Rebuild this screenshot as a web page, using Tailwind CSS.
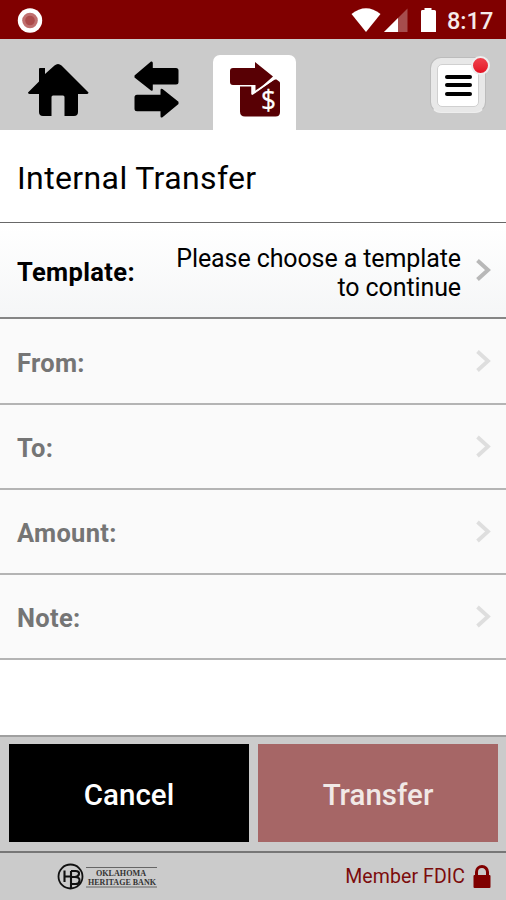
<!DOCTYPE html>
<html lang="en">
<head>
<meta charset="utf-8">
<meta name="viewport" content="width=device-width, initial-scale=1">
<title>Internal Transfer</title>
<script src="https://cdn.jsdelivr.net/npm/@tailwindcss/browser@4"></script>
</head>
<body class="bg-white">
<div class="flex h-[900px] w-[506px] flex-col overflow-hidden font-['Roboto',sans-serif] text-black">
  <header class="flex h-[39px] shrink-0 items-center bg-[#800000] pl-[17px] pr-3">
    <svg class="size-[26px]" viewBox="0 0 26 26"><circle cx="13" cy="13.500" r="12.200" fill="#fff"/><circle cx="13" cy="13.500" r="7.800" fill="#c06f6f"/><circle cx="13" cy="13.500" r="4.800" fill="#ac4b4b"/></svg>
    <svg class="ml-auto h-[39px] w-[88px]" viewBox="350 0 88 39"><path d="M351.500 14Q366 2.500 380.500 14L366 32Z" fill="#fff"/><path d="M407.500 8.500V32H384Z" fill="#a64d4d"/><path d="M398 18V32H384Z" fill="#fff"/><path d="M422 10h2.500V8h7v2h3q1.500 0 1.500 1.500V32h-15V11.500q0-1.500 1-1.500Z" fill="#fff"/></svg>
    <time class="ml-[9px] w-[47px] whitespace-nowrap pt-[3px] text-[23.500px] font-medium leading-[39px] text-[#f6eaea]">8:17</time>
  </header>
  <nav class="flex h-[91px] shrink-0 items-end bg-[#cbcbcb]">
    <a class="ml-[28px] h-[75px] w-[61px]"><svg class="h-[75px] w-[61px]" viewBox="28 55 61 75"><path d="M39 69q0-1 1-1h5v6l9.500-8.500q3.500-3 7 0L88.500 92.500q0 1.500-2 1.500H78v18q0 4-4 4h-9.500V97q0-1.500-1.500-1.500H53q-1.500 0-1.500 1.500v19H43q-4 0-4-4V94h-8q-3 0-3-1.500L39 81.500Z" fill="#000"/></svg></a>
    <a class="ml-[43px] h-[75px] w-[50px]"><svg class="h-[75px] w-[50px]" viewBox="132 55 50 75"><path d="M134.500 75.500L151 61.500q1.800-.5 1.800 1.500v5H176q2.500 0 2.500 2.500v11.500q0 2.500-2.500 2.500h-23.200v5q0 1.800-1.800 1L134.500 77.500ZM178.500 101.800L162.500 89q-2-.8-2 1.200v4.500H137q-2.500 0-2.500 2.500v11.500q0 2.500 2.500 2.500h23.500v5q0 2 2 1L178.500 104Z" fill="#000"/></svg></a>
    <a class="ml-[31px] h-[75px] w-[83px] rounded-t-[7px] bg-white"><svg class="h-[75px] w-[83px]" viewBox="213 55 83 75"><path d="M240 86h11.500v8l1 1L274.500 79.500h2q3.500 2 3.500 4v28.500q0 4.500-4.500 4.500h-30.500q-5 0-5-5Z" fill="#580004"/><path d="M230 71q0-3 3-3h22v-6l18 14.500L255.500 92v-7H233q-3 0-3-3Z" fill="#580004"/><path d="M239.500 85.700h12.700v7.800L275 78.300" fill="none" stroke="#fff" stroke-width="1.400"/><text x="261" y="110" fill="#fff" stroke="#fff" stroke-width=".3" font-family="Open Sans" font-size="28" textLength="15" lengthAdjust="spacingAndGlyphs">$</text></svg></a>
    <button class="relative mb-[17px] ml-[134px] flex h-[56px] w-[56px] items-center justify-center rounded-[11px] border border-[#bcbcbc] border-b-[#eee] bg-[#e8e8e8]">
      <span class="flex h-[43px] w-[42px] flex-col items-center justify-center gap-[4.500px] rounded-[5px] border border-[#d0d0d0] bg-white"><i class="h-[4px] w-[27px] shrink-0 rounded-full bg-black"></i><i class="h-[4px] w-[27px] shrink-0 rounded-full bg-black"></i><i class="h-[4px] w-[27px] shrink-0 rounded-full bg-black"></i></span>
      <i class="absolute -top-[2px] right-[-5px] size-[19px] rounded-full border-2 border-[#eee] bg-linear-to-b from-[#f0404c] to-[#e40e22]"></i>
    </button>
  </nav>
  <h1 class="flex h-[93px] shrink-0 items-center border-b-[1.500px] border-[#686868] pl-[17px] pt-[3px] text-[32px] tracking-[0.38px]">Internal Transfer</h1>
  <main class="shrink-0">
    <div class="flex h-[96px] items-center border-b-2 border-[#858585] bg-linear-to-b from-white to-[#f5f6f7] pl-[17px] pr-[15px]">
      <b class="pt-[4px] text-[25.500px] tracking-[0.35px]">Template:</b>
      <span class="ml-auto w-[300px] pt-[6px] text-right text-[25px] leading-[29px] tracking-[-0.1px]">Please choose a template to continue</span>
      <svg class="ml-[14px] h-[24px] w-[16px]" viewBox="0 0 16 24"><path d="M2.500 2.500L13 12L2.500 21.500" fill="none" stroke="#b8b8b8" stroke-width="4"/></svg>
    </div>
    <div class="flex h-[86px] items-center border-b-2 border-[#b4b4b4] bg-[#fafafa] pl-[17px] pr-[15px] text-[#757575]"><b class="pt-[4px] text-[25.500px] tracking-[0.3px]">From:</b><svg class="ml-auto h-[24px] w-[16px]" viewBox="0 0 16 24"><path d="M2.500 2.500L13 12L2.500 21.500" fill="none" stroke="#dedede" stroke-width="3.800"/></svg></div>
    <div class="flex h-[85px] items-center border-b-2 border-[#b4b4b4] bg-[#fafafa] pl-[17px] pr-[15px] text-[#757575]"><b class="pt-[4px] text-[25.500px] tracking-[0.3px]">To:</b><svg class="ml-auto h-[24px] w-[16px]" viewBox="0 0 16 24"><path d="M2.500 2L13 11.500L2.500 21" fill="none" stroke="#dedede" stroke-width="3.800"/></svg></div>
    <div class="flex h-[85px] items-center border-b-2 border-[#b4b4b4] bg-[#fafafa] pl-[17px] pr-[15px] text-[#757575]"><b class="pt-[4px] text-[25.500px] tracking-[0.3px]">Amount:</b><svg class="ml-auto h-[24px] w-[16px]" viewBox="0 0 16 24"><path d="M2.500 2L13 11.500L2.500 21" fill="none" stroke="#dedede" stroke-width="3.800"/></svg></div>
    <div class="flex h-[85px] items-center border-b-2 border-[#b4b4b4] bg-[#fafafa] pl-[17px] pr-[15px] text-[#757575]"><b class="pt-[4px] text-[25.500px] tracking-[0.3px]">Note:</b><svg class="ml-auto h-[24px] w-[16px]" viewBox="0 0 16 24"><path d="M2.500 2L13 11.500L2.500 21" fill="none" stroke="#dedede" stroke-width="3.800"/></svg></div>
  </main>
  <section class="mt-auto flex h-[116px] shrink-0 justify-between border-t-2 border-[#a0a0a0] bg-[#cbcbcb] pl-[9px] pr-[8px] pt-[7px]">
    <button class="h-[98px] w-[240px] bg-black pt-[4px] text-[29.500px] font-medium text-white">Cancel</button>
    <button class="h-[98px] w-[240px] bg-[#a66666] pt-[4px] text-[29.500px] font-medium text-[#f1e9e6]">Transfer</button>
  </section>
  <footer class="flex h-[49px] shrink-0 items-center border-t-2 border-[#777] bg-[#cbcbcb] pl-[56px] pr-[15px]">
    <svg class="h-[46px] w-[104px]" viewBox="56 853 104 46"><circle cx="70.500" cy="875.500" r="12" fill="none" stroke="#111" stroke-width="1.800"/><path d="M64.500 869.500V881M64.500 875.500H71M71 870V888M71 870h4.500q4 .2 3.500 3t-4 3H71M75 876q5 .2 4.500 3.800T75 883h-4" fill="none" stroke="#111" stroke-width="2.100"/><path d="M86 866.500h71M86 886h71" stroke="#666" stroke-width="1"/><text x="96" y="875" font-family="Liberation Serif" font-size="8.500" font-weight="bold" fill="#333" textLength="50" lengthAdjust="spacingAndGlyphs">OKLAHOMA</text><text x="88" y="884" font-family="Liberation Serif" font-size="8.500" font-weight="bold" fill="#333" textLength="68" lengthAdjust="spacingAndGlyphs">HERITAGE BANK</text></svg>
    <span class="ml-auto pt-[1px] text-[19.500px] tracking-[0.1px] text-[#7c0c0c]">Member FDIC</span>
    <svg class="ml-[8px] h-[24px] w-[18px]" viewBox="0 0 18 24"><path d="M3.500 11V7a5.500 5.500 0 0 1 11 0v4" fill="none" stroke="#800000" stroke-width="3"/><rect x=".5" y="10" width="17" height="13" rx="1" fill="#800000"/></svg>
  </footer>
</div>
</body>
</html>
